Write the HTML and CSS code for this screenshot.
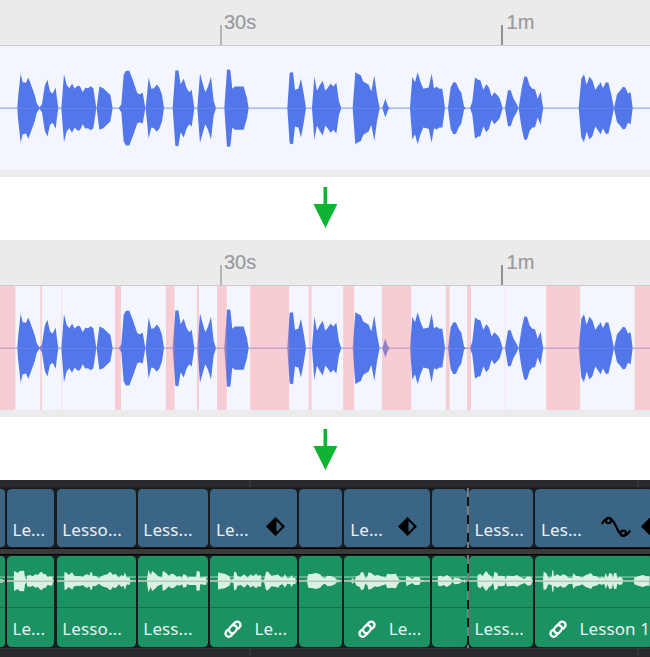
FILE: index.html
```html
<!DOCTYPE html>
<html lang="en">
<head>
<meta charset="utf-8">
<title>Silence removal</title>
<link rel="stylesheet" href="styles.css">
</head>
<body>
<svg class="defs" width="0" height="0">
  <defs>
    <path id="half" d="M52,0L54,-30L62,-104L68,-78L78,-76L85,-92L95,-65L104,-40L110,-15L118,-2L126,-12L134,-66L142,-86L150,-50L158,-44L167,-62L172,-20L175,0
    M184,0L192,-102L200,-70L208,-60L216,-74L224,-58L232,-67L240,-66L248,-48L256,-61L264,-60L272,-66L280,-60L289,0
    M290,0L298,-65L310,-60L320,-50L331,-40L338,0
    M356,0L364,-12L371,-100L378,-112L388,-112L400,-80L412,-45L420,-42L428,-47L436,0
    M437,0L446,-92L454,-58L462,-60L470,-71L478,-62L486,-40L492,0
    M518,0L526,-113L535,-114L542,-72L551,-88L560,-60L568,-48L575,-55L583,0
    M592,0L600,-104L608,-75L616,-48L624,-65L633,-94L641,-22L648,0
    M673,0L681,-116L691,-115L697,-58L705,-65L731,-65L741,-30L746,0
    M862,0L869,-106L879,-108L885,-55L895,-58L903,-88L911,-45L918,0
    M936,0L943,-95L951,-52L959,-68L968,-82L976,-52L984,-62L992,-74L1000,-65L1009,-76L1017,-20L1024,0
    M1058,0L1066,-108L1073,-103L1082,-99L1090,-80L1106,-70L1114,-50L1123,-98L1131,-40L1139,0
    M1147,0L1156,-28L1164,-6L1169,0
    M1230,0L1237,-94L1245,-78L1253,-108L1261,-80L1270,-58L1286,-62L1295,-104L1302,-60L1310,-64L1318,-58L1327,-58L1335,0
    M1344,0L1352,-62L1360,-78L1368,-77L1376,-58L1384,-46L1392,-5L1398,0
    M1410,0L1417,-20L1425,-92L1433,-86L1441,-84L1450,-55L1459,-72L1467,-62L1475,-35L1483,-48L1491,-40L1499,-30L1508,0
    M1515,0L1524,-54L1532,-54L1540,-30L1548,-16L1556,0L1565,-60L1573,-95L1581,-94L1589,-68L1597,-58L1605,-57L1613,-28L1622,-50L1627,-15L1630,0
    M1736,0L1744,-88L1752,-102L1760,-70L1768,-94L1777,-84L1786,-55L1802,-78L1809,-60L1817,-77L1825,-77L1834,-40L1842,0L1851,-42L1860,-52L1869,-64L1876,-62L1884,-44L1892,-48L1898,0Z"/>
    <g id="recording">
      <rect y="-2.500" width="1950" height="5" fill="#aabdf7"/>
      <use href="#half"/>
      <use href="#half" transform="scale(1,-1)"/>
    </g>
    <path id="halfspeech" d="M-10,-6L6,-5L10,0M41,0L42,-30L48,-27L54,-24L58,-30L72,-31L75,-10L80,-4L81,-16L90,-18L98,-14L106,-20L114,-18L120,-26L127,-26L130,-20L136,-22L142,-12L156,-14L160,0
    M192,0L193,-28L200,-24L205,-18L216,-26L222,-16L232,-14L240,-15L248,-12L254,-18L262,-20L268,-16L271,-26L275,-26L278,-14L286,-16L296,-8L304,-14L312,-18L322,-20L328,-27L332,-26L338,-18L344,-22L350,-18L356,-10L364,-18L370,-14L374,-26L380,-10L388,-12L390,-4L400,0
    M440,0L445,-34L452,-18L456,-30L464,-24L474,-14L486,-10L488,-30L496,-26L506,-16L514,-22L522,-20L530,-12L538,-14L546,-10L550,-20L558,-18L562,-8L566,-12L588,-12L590,-30L599,-28L600,-10L618,-12L620,0
    M655,0L656,-26L662,-24L676,-22L690,-14L694,-4L702,-6L704,-28L710,-26L714,-14L724,-12L734,-20L744,-10L754,-20L760,-14L770,-22L776,-16L784,-18L786,-4L794,-4L800,-28L806,-28L816,-16L830,-18L836,-20L842,-12L850,-10L856,-20L864,-8L872,-10L876,-18L882,-8L888,-10L889,0
    M922,0L926,-20L940,-22L950,-24L962,-20L968,-12L976,-8L984,-16L996,-14L1006,-10L1012,-4L1020,-4L1022,0
    M1055,-2L1060,-8L1066,-2L1072,-14L1082,-18L1086,-28L1094,-24L1098,-8L1104,-12L1108,-26L1116,-24L1126,-16L1136,-18L1146,-14L1160,-10L1164,-22L1176,-20L1190,-22L1196,-10L1202,-2L1220,-2L1222,-16L1232,-10L1240,-6L1246,-12L1260,-12L1264,-4L1280,0
    M1312,0L1314,-14L1322,-16L1330,-12L1340,-18L1346,-14L1352,-10L1358,-2L1362,-10L1376,-8L1386,-2L1392,-2L1394,-7L1396,0
    M1432,0L1434,-18L1442,-22L1448,-14L1454,-24L1460,-30L1466,-20L1474,-14L1480,-6L1484,-28L1492,-24L1496,-14L1504,-16L1514,-14L1518,-4L1521,-16L1530,-16L1540,-14L1552,-18L1560,-12L1566,-10L1574,-6L1584,-14L1594,-12L1598,0
    M1630,0L1632,-28L1640,-24L1646,-10L1656,-12L1658,-32L1661,-32L1663,-14L1674,-20L1682,-14L1690,-20L1698,-18L1706,-10L1718,-8L1721,-24L1728,-16L1738,-14L1748,-10L1758,-18L1766,-20L1774,-24L1780,-16L1790,-14L1800,-8L1806,-12L1814,-8L1818,-24L1824,-10L1829,-24L1837,-22L1840,-8L1843,-24L1850,-24L1853,-8L1860,-12L1868,-10L1870,0
    M1902,0L1904,-10L1916,-14L1930,-18L1940,-14L1950,-14L1950,0Z"/>
    <g id="speech">
      <rect x="-30" y="-15" width="2000" height="6" fill="#5fb38d"/>
      <rect x="-30" y="-3" width="2000" height="6" fill="#a9bdae"/>
      <use href="#halfspeech" fill="#d9f1e3"/>
      <use href="#halfspeech" fill="#d9f1e3" transform="scale(1,-1)"/>
      <rect x="-30" y="-1" width="2000" height="3" fill="#a4b7a9"/>
    </g>
    <g id="link" transform="translate(9 9.200) rotate(-45)" fill="none" stroke="#fff" stroke-width="2.300" stroke-linecap="round">
      <path d="M-3.300 2.300A3.300 3.300 0 0 1 -1 -3.300H6A3.300 3.300 0 0 1 6 3.300H4"/>
      <path d="M3.300 -2.300A3.300 3.300 0 0 1 1 3.300H-6A3.300 3.300 0 0 1 -6 -3.300H-4"/>
    </g>
    <g id="keyframe">
      <path d="M9.500 0L19 9.500L9.500 19L0 9.500Z"/>
      <path d="M10.500 4L16 9.500L10.500 15Z" fill="#3b6585"/>
    </g>
  </defs>
</svg>

<main class="page">
  <section class="panel">
    <div class="ruler">
      <div class="mark"><i></i><span>30s</span></div>
      <div class="mark strong"><i></i><span>1m</span></div>
    </div>
    <svg class="wave" viewBox="0 0 650 124"><use href="#recording" transform="translate(0 62.200) scale(.33333)"/></svg>
  </section>

  <svg class="arrow" viewBox="0 0 25 41"><path d="M10.500 0H14.200V17H24.400L12.400 41L.4 17H10.500Z"/></svg>

  <section class="panel">
    <div class="ruler">
      <div class="mark"><i></i><span>30s</span></div>
      <div class="mark strong"><i></i><span>1m</span></div>
    </div>
    <svg class="wave" viewBox="0 0 650 124">
      <use href="#recording" transform="translate(0 62.200) scale(.33333)"/>
      <path class="silence" d="M0 0H15.300V124H0ZM40.300 0H42V124H40.300ZM115 0H121V124H115ZM166 0H174.500V124H166ZM197 0H199V124H197ZM217 0H226.800V124H217ZM250.200 0H289.200V124H250.200ZM308.800 0H311.600V124H308.800ZM343.200 0H354V124H343.200ZM382 0H411.200V124H382ZM446 0H449.600V124H446ZM467 0H471V124H467ZM546 0H580.200V124H546ZM634.500 0H650V124H634.500Z"/>
      <path class="silence faint" d="M61 0H62.400V124H61ZM504.500 0H505.500V124H504.500Z"/>
    </svg>
  </section>

  <svg class="arrow second" viewBox="0 0 25 41"><path d="M10.500 0H14.200V17H24.400L12.400 41L.4 17H10.500Z"/></svg>

  <section class="timeline">
    <div class="edge top"></div>
    <div class="track video">
      <div class="clip c0"></div>
      <div class="clip c1"><span>Le...</span></div>
      <div class="clip c2"><span>Lesso...</span></div>
      <div class="clip c3"><span>Less...</span></div>
      <div class="clip c4"><span>Le...</span><svg class="key" viewBox="0 0 19 19"><use href="#keyframe"/></svg></div>
      <div class="clip c5"></div>
      <div class="clip c6"><span>Le...</span><svg class="key" viewBox="0 0 19 19"><use href="#keyframe"/></svg></div>
      <div class="clip c7"></div>
      <div class="clip c8"><span>Less...</span></div>
      <div class="clip c9"><span>Les...</span>
        <svg class="curve" viewBox="0 0 30 22"><g fill="none" stroke="#000" stroke-width="2.200"><path d="M.8 8C3 4 5.500 2 8.500 2.300C15 3 15.500 19 22.500 19.500C25.500 19.500 27.500 17 29.300 14.500"/><circle cx="7.500" cy="4.500" r="2.600"/><circle cx="22.300" cy="17.300" r="2.700"/></g></svg>
        <svg class="key" viewBox="0 0 19 19"><use href="#keyframe"/></svg>
      </div>
    </div>
    <div class="divider"></div>
    <div class="track audio">
      <div class="clip c0"><svg class="speech" viewBox="-1 -75 14 153"><use href="#speech"/></svg></div>
      <div class="clip c1"><svg class="speech" viewBox="21 -75 143 153"><use href="#speech"/></svg><p><span>Le...</span></p></div>
      <div class="clip c2"><svg class="speech" viewBox="171 -75 236 153"><use href="#speech"/></svg><p><span>Lesso...</span></p></div>
      <div class="clip c3"><svg class="speech" viewBox="414 -75 211 153"><use href="#speech"/></svg><p><span>Less...</span></p></div>
      <div class="clip c4"><svg class="speech" viewBox="632 -75 260 153"><use href="#speech"/></svg><p class="linked"><svg class="link" viewBox="0 0 18 18"><use href="#link"/></svg><span>Le...</span></p></div>
      <div class="clip c5"><svg class="speech" viewBox="899 -75 128 153"><use href="#speech"/></svg></div>
      <div class="clip c6"><svg class="speech" viewBox="1035 -75 254 153"><use href="#speech"/></svg><p class="linked"><svg class="link" viewBox="0 0 18 18"><use href="#link"/></svg><span>Le...</span></p></div>
      <div class="clip c7"><svg class="speech" viewBox="1296 -75 104 153"><use href="#speech"/></svg></div>
      <div class="clip c8"><svg class="speech" viewBox="1408 -75 192 153"><use href="#speech"/></svg><p><span>Less...</span></p></div>
      <div class="clip c9"><svg class="speech" viewBox="1607 -75 352 153"><use href="#speech"/></svg><p class="linked"><svg class="link" viewBox="0 0 18 18"><use href="#link"/></svg><span>Lesson 1</span></p></div>
    </div>
    <div class="edge bottom"></div>
  </section>
</main>
</body>
</html>
```
FILE: styles.css
```css
* { box-sizing: border-box; }
body { margin: 0; background: #fff; overflow: hidden; }
.defs { position: absolute; }
.page { width: 650px; height: 657px; display: flex; flex-direction: column; overflow: hidden; }

.panel { height: 177px; flex: none; background: #ebebeb; }
.ruler {
  height: 46px;
  padding-left: 220px;
  display: grid;
  grid-template-columns: 281.400px 1fr;
  border-bottom: 1px solid #cdcdcf;
}
.mark {
  display: flex;
  align-items: flex-end;
  font: 20px/22px "Liberation Sans", Arial, sans-serif;
  color: #99999d;
  -webkit-text-stroke: .2px #99999d;
}
.mark i { width: 1.500px; height: 20px; background: #b4b4b6; }
.mark span { margin: 0 0 12px 2.500px; }
.mark.strong i { width: 2px; background: #929296; }
.mark.strong span { margin-left: 3.200px; }
.wave { display: block; width: 650px; height: 124px; background: #f3f6ff; fill: #5277ea; }
.silence { fill: rgba(255, 138, 136, .38); }
.faint { opacity: .4; }

.arrow { flex: none; width: 25px; height: 41px; margin: 10px 0 12px 313px; fill: #10b434; }
.arrow.second { margin-top: 12px; margin-bottom: 10px; }

.timeline { height: 177px; flex: none; background: #28282f; overflow: hidden; }
.edge {
  height: 8px;
  background:
    linear-gradient(#39393d, #39393d) 249px 0 / 1.500px 100% no-repeat,
    linear-gradient(#39393d, #39393d) 637px 0 / 1.500px 100% no-repeat;
}
.edge.top { border-bottom: 1px solid #202124; }
.edge.bottom { border-top: 1px solid #333437; }
.track {
  display: grid;
  grid-template-columns: 6.700px 49.900px 81.100px 72.600px 89px 45.200px 87.200px 37.200px 66.400px 120px;
  background:
    repeating-linear-gradient(#858585 0 9px, #101113 9px 18px) 466.500px 0 / 1.800px 100% no-repeat,
    #191b1e;
}
.video { height: 61px; padding: 1.400px 0 1px; border-bottom: 1px solid #000; }
.audio { height: 94px; padding: 1px 0 1.500px; border-top: 1px solid #000; }
.divider { height: 5px; background: #3b3b3b; }
.clip {
  min-width: 0;
  margin-right: 2.100px;
  border-radius: 4.500px;
  overflow: hidden;
  font: 17px/24px "Noto Sans", sans-serif;
  letter-spacing: .12px;
  color: #e9f0f5;
  white-space: nowrap;
}
.video .clip { background: #3b6585; display: flex; align-items: flex-end; padding: 0 12.600px 5px 5.700px; }
.track .c0 { padding: 0; border-radius: 0 4px 4px 0; }
.video .clip span { flex: none; }
.key { width: 19px; height: 19px; margin: 0 0 6px auto; flex: none; }
.c9 .curve { width: 30px; height: 22px; flex: none; margin: 0 0 4px 19px; }
.c9 .key { margin-left: 10px; }
.audio .clip { background: #1a9261; }
.speech { display: block; width: 100%; height: 52px; border-bottom: 1px solid #15704c; }
.audio p { margin: 0; height: 39px; padding: 9px 0 0 5.700px; display: flex; }
.audio .linked { padding-left: 13.700px; }
.link { width: 18px; height: 18px; margin: 3px 12.500px 0 0; flex: none; overflow: visible; }
```
